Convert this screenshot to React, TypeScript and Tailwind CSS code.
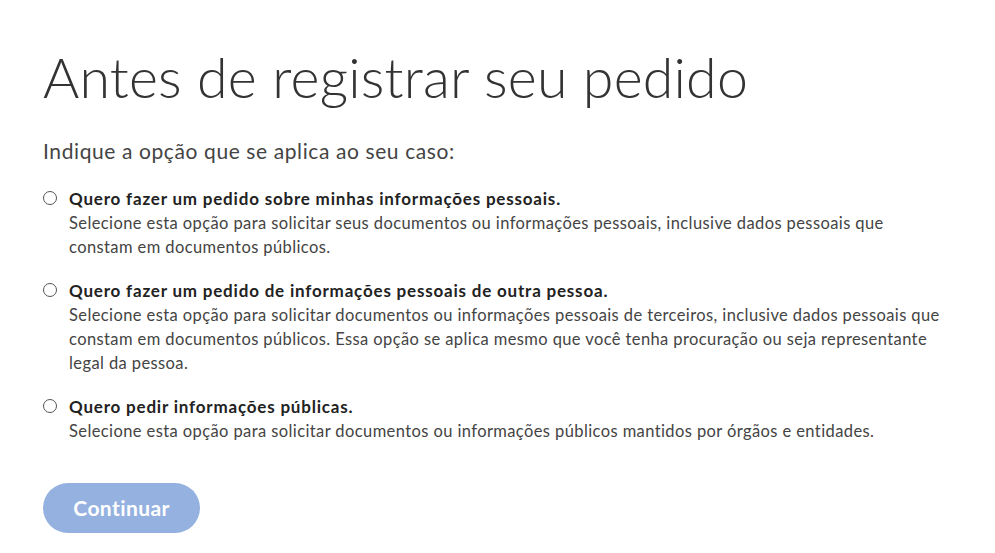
import React from "react";

const options = [
  {
    title: "Quero fazer um pedido sobre minhas informações pessoais.",
    lines: [
      "Selecione esta opção para solicitar seus documentos ou informações pessoais, inclusive dados pessoais que",
      "constam em documentos públicos.",
    ],
  },
  {
    title: "Quero fazer um pedido de informações pessoais de outra pessoa.",
    lines: [
      "Selecione esta opção para solicitar documentos ou informações pessoais de terceiros, inclusive dados pessoais que",
      "constam em documentos públicos. Essa opção se aplica mesmo que você tenha procuração ou seja representante",
      "legal da pessoa.",
    ],
  },
  {
    title: "Quero pedir informações públicas.",
    lines: [
      "Selecione esta opção para solicitar documentos ou informações públicos mantidos por órgãos e entidades.",
    ],
  },
];

export default function App() {
  return (
    <div
      className="min-h-[553px] w-[995px] bg-white pl-[43px] pt-[45px] text-[#333]"
      style={{ fontFamily: "Lato, 'Open Sans', sans-serif" }}
    >
      <h1 className="text-[55.5px] font-light leading-[64px] tracking-[0.2px] text-[#333] whitespace-nowrap">
        Antes de registrar seu pedido
      </h1>
      <p className="mt-[29px] text-[21px] leading-[26px] tracking-[0.6px] text-[#444] whitespace-nowrap">
        Indique a opção que se aplica ao seu caso:
      </p>
      <div className="mt-[22px] flex flex-col gap-[19px]">
        {options.map((o, i) => (
          <label key={i} className="flex items-start gap-[12px]">
            <span className="mt-[5px] h-[14px] w-[14px] shrink-0 rounded-full border border-[#555] bg-white" />
            <span className="flex flex-col">
              <span className="text-[17px] font-bold leading-[25px] tracking-[0.8px] text-[#222] whitespace-nowrap">
                {o.title}
              </span>
              {o.lines.map((l, j) => (
                <span
                  key={j}
                  className="text-[16.5px] leading-[24px] tracking-[0.4px] text-[#444] whitespace-nowrap"
                >
                  {l}
                </span>
              ))}
            </span>
          </label>
        ))}
      </div>
      <button className="mt-[40px] h-[50px] w-[157px] rounded-full bg-[#94b1e0] text-[21px] font-bold tracking-[0.4px] text-white">
        Continuar
      </button>
    </div>
  );
}
